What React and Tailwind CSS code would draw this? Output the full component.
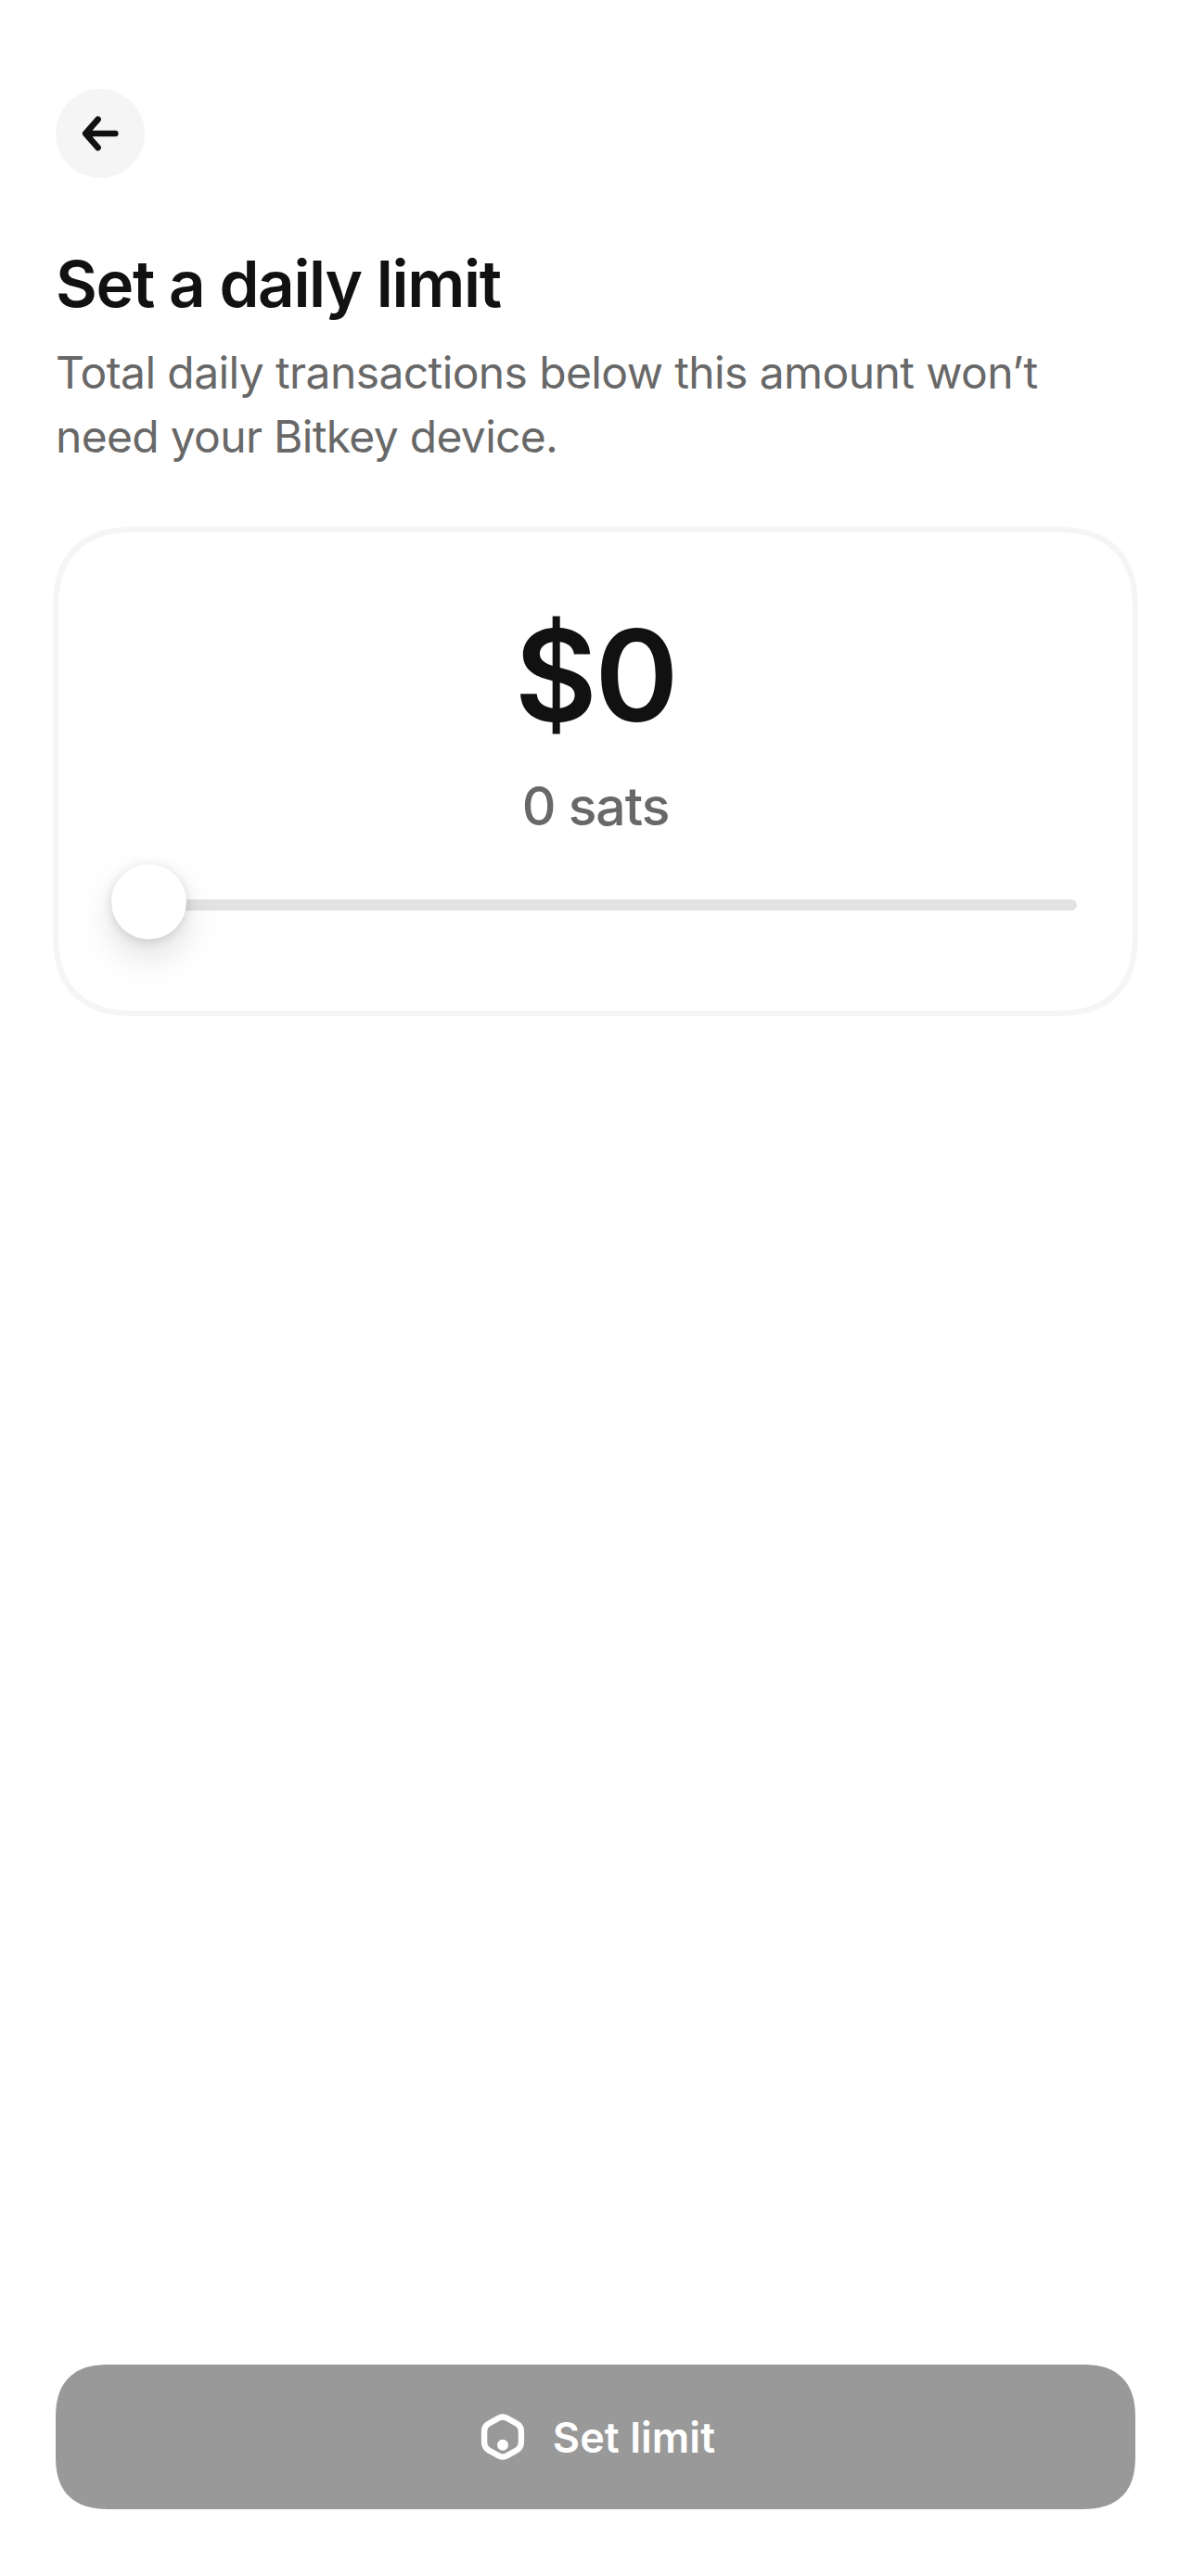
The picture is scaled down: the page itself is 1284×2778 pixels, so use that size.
function BackArrowIcon() {
  return (
    <svg viewBox="0 0 96 96" className="size-24" fill="none" stroke="#111111" strokeWidth="6.6" strokeLinecap="round" strokeLinejoin="round">
      <path d="M45.6 32.8 32.2 48l13.4 15.2M34 48h30.3" />
      <path d="M39 43v10l-5-5z" fill="#111111" strokeWidth="1" />
    </svg>
  );
}

function BitkeyIcon() {
  return (
    <svg viewBox="-29 -29 58 58" className="size-[58px]" fill="none">
      <path
        d="M5 -20.1 14.9 -14.4A10 10 0 0 1 19.9 -5.7V5.7A10 10 0 0 1 14.9 14.4L5 20.1A10 10 0 0 1 -5 20.1L-14.9 14.4A10 10 0 0 1 -19.9 5.7V-5.7A10 10 0 0 1 -14.9 -14.4L-5 -20.1A10 10 0 0 1 5 -20.1Z"
        stroke="white"
        strokeWidth="6.4"
      />
      <circle cx="0" cy="8.8" r="6" fill="white" />
    </svg>
  );
}

function Slider() {
  return (
    <div className="relative mt-[26px] mr-[3px] flex h-[81px] items-center">
      <div className="mt-[7px] h-3 w-full rounded-full bg-[#e3e3e5]" />
      <div className="absolute top-0 left-0 size-[81px] rounded-full bg-white shadow-[0_18px_39px_rgba(0,0,0,0.13),0_2px_12px_rgba(0,0,0,0.13)]" />
    </div>
  );
}

export default function App() {
  return (
    <div className="flex h-[2778px] w-[1284px] flex-col bg-white px-[60px] pt-24 pb-[72px] font-[Inter,sans-serif]">
      <button aria-label="Back" className="size-24 rounded-full bg-[#f5f5f5]">
        <BackArrowIcon />
      </button>

      <h1 className="mt-[72px] text-[69px] leading-[84px] font-semibold tracking-[-1.34px] text-[#111111]">
        Set a daily limit
      </h1>
      <p className="mt-[19px] text-[48px] leading-[69px] tracking-[-0.69px] text-[#686868]">
        <span className="tracking-[-0.61px]">Total daily transactions below this amount won’t</span>
        <br />
        need your Bitkey device.
      </p>

      <section className="-mx-[3px] mt-[63px] flex h-[528px] flex-col rounded-[90px] border-[6px] border-[#f5f5f5] px-[57px] pt-[70px] [corner-shape:superellipse(1.31)]">
        <div className="text-center text-[137px] leading-[168px] font-semibold tracking-[-2.4px] text-[#111111]">$0</div>
        <div className="mt-[22px] text-center text-[57px] leading-[72px] font-medium tracking-[-1px] text-[#686868]">0 sats</div>
        <Slider />
      </section>

      <button className="mt-auto flex h-[156px] items-center justify-center gap-[25px] rounded-[58px] bg-[#999999] text-[45px] font-semibold tracking-[0.05px] text-white [corner-shape:superellipse(1.31)]">
        <BitkeyIcon />
        <span className="mt-0.5">Set limit</span>
      </button>
    </div>
  );
}
